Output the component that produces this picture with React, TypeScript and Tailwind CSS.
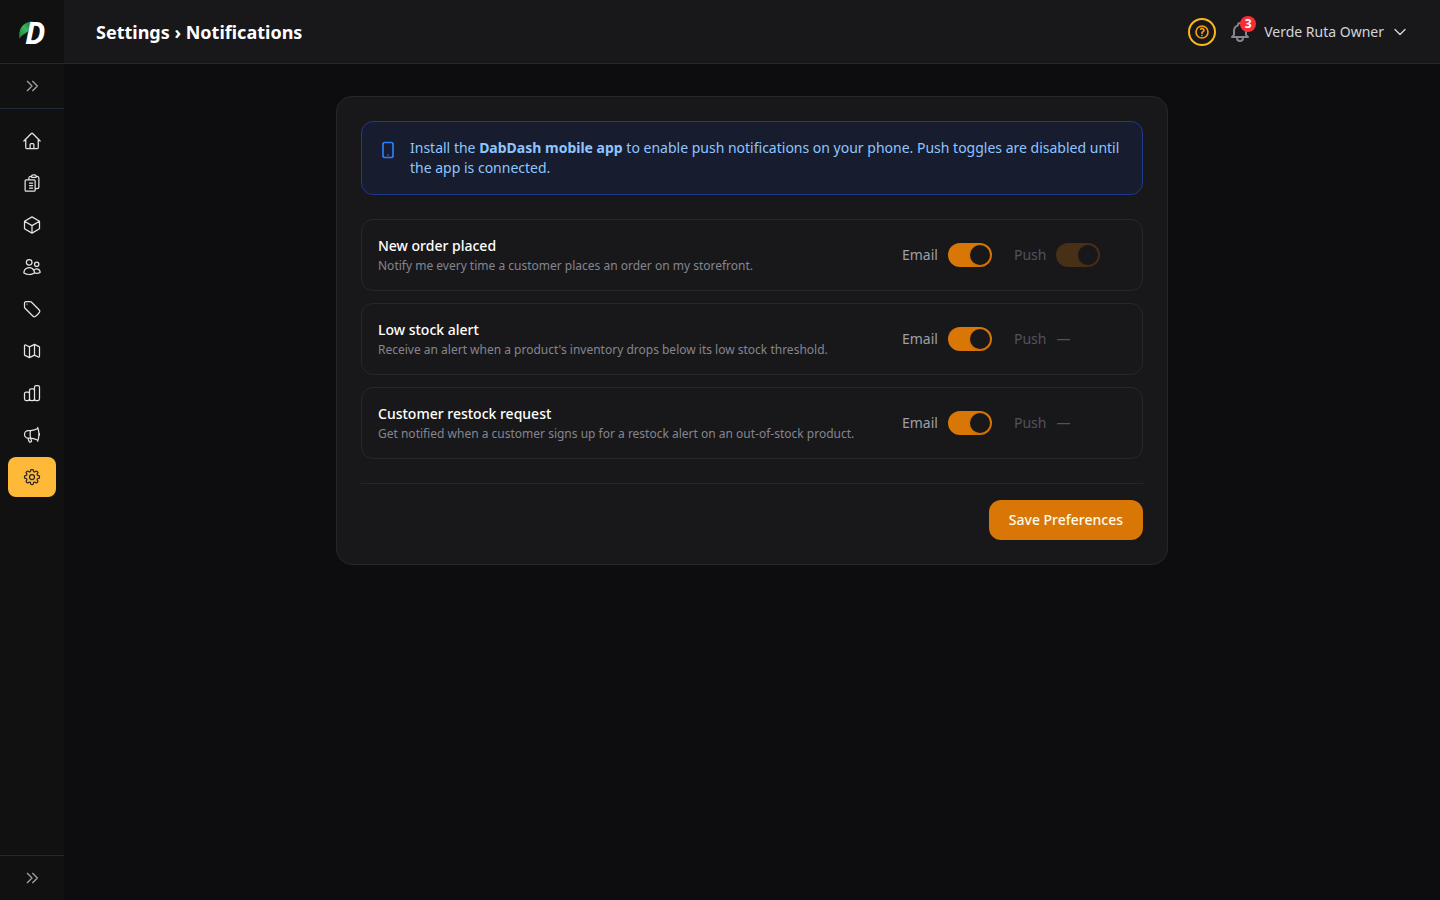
import React, { useState } from 'react';
import {
  HiOutlineHome,
  HiOutlineCube,
  HiOutlineUsers,
  HiOutlineTag,
  HiOutlineMegaphone,
  HiOutlineCog8Tooth,
  HiOutlineChevronDown,
} from 'react-icons/hi2';
import { HiOutlineBell, HiOutlineChevronDoubleRight, HiOutlineDeviceMobile } from 'react-icons/hi';

interface IconProps {
  className?: string;
}

const OutlineIcon: React.FC<IconProps & { d: string; strokeWidth?: number }> = ({ d, className, strokeWidth = 1.5 }) => (
  <svg
    viewBox="0 0 24 24"
    fill="none"
    stroke="currentColor"
    strokeWidth={strokeWidth}
    strokeLinecap="round"
    strokeLinejoin="round"
    className={className}
    aria-hidden="true"
  >
    <path d={d} />
  </svg>
);

const OrdersIcon: React.FC<IconProps> = ({ className }) => (
  <OutlineIcon
    className={className}
    d="M9 12h3.75M9 15h3.75M9 18h3.75m3 .75H18a2.25 2.25 0 0 0 2.25-2.25V6.108c0-1.135-.845-2.098-1.976-2.192a48.424 48.424 0 0 0-1.123-.08m-5.801 0c-.065.21-.1.433-.1.664 0 .414.336.75.75.75h4.5a.75.75 0 0 0 .75-.75 2.25 2.25 0 0 0-.1-.664m-5.8 0A2.251 2.251 0 0 1 13.5 2.25H15c1.012 0 1.867.668 2.15 1.586m-5.8 0c-.376.023-.75.05-1.124.08C9.095 4.01 8.25 4.973 8.25 6.108V8.25m0 0H4.875c-.621 0-1.125.504-1.125 1.125v11.25c0 .621.504 1.125 1.125 1.125h9.75c.621 0 1.125-.504 1.125-1.125V9.375c0-.621-.504-1.125-1.125-1.125H8.25Z"
  />
);

const MapIcon: React.FC<IconProps> = ({ className }) => (
  <OutlineIcon
    className={className}
    d="M9 20l-5.447-2.724A1 1 0 013 16.382V5.618a1 1 0 011.447-.894L9 7m0 13l6-3m-6 3V7m6 10l4.553 2.276A1 1 0 0021 18.382V7.618a1 1 0 00-.553-.894L15 4m0 13V4m0 0L9 7"
  />
);

const ChartIcon: React.FC<IconProps> = ({ className }) => (
  <OutlineIcon
    className={className}
    d="M9 19v-6a2 2 0 00-2-2H5a2 2 0 00-2 2v6a2 2 0 002 2h2a2 2 0 002-2zm0 0V9a2 2 0 012-2h2a2 2 0 012 2v10m-6 0a2 2 0 002 2h2a2 2 0 002-2m0 0V5a2 2 0 012-2h2a2 2 0 012 2v14a2 2 0 01-2 2h-2a2 2 0 01-2-2z"
  />
);

const HelpIcon: React.FC<IconProps> = ({ className }) => (
  <OutlineIcon
    className={className}
    strokeWidth={2.5}
    d="M9.879 7.519c1.171-1.025 3.071-1.025 4.242 0 1.172 1.025 1.172 2.687 0 3.712-.203.179-.43.326-.67.442-.745.361-1.45.999-1.45 1.827v.75M21 12a9 9 0 1 1-18 0 9 9 0 0 1 18 0Zm-9 5.25h.008v.008H12v-.008Z"
  />
);

const navItems = [
  { label: 'Dashboard', icon: HiOutlineHome },
  { label: 'Orders', icon: OrdersIcon },
  { label: 'Products', icon: HiOutlineCube },
  { label: 'Customers', icon: HiOutlineUsers },
  { label: 'Discounts', icon: HiOutlineTag },
  { label: 'Delivery zones', icon: MapIcon },
  { label: 'Analytics', icon: ChartIcon },
  { label: 'Marketing', icon: HiOutlineMegaphone },
  { label: 'Settings', icon: HiOutlineCog8Tooth, active: true },
];

const preferences = [
  {
    id: 'new_order',
    title: 'New order placed',
    description: 'Notify me every time a customer places an order on my storefront.',
    hasPush: true,
  },
  {
    id: 'low_stock',
    title: 'Low stock alert',
    description: "Receive an alert when a product's inventory drops below its low stock threshold.",
    hasPush: false,
  },
  {
    id: 'restock_request',
    title: 'Customer restock request',
    description: 'Get notified when a customer signs up for a restock alert on an out-of-stock product.',
    hasPush: false,
  },
];

const Logo: React.FC = () => (
  <svg viewBox="0 0 32 32" className="w-8 h-8 overflow-visible" role="img" aria-label="DabDash">
    <defs>
      <linearGradient id="leaf" x1="0" y1="1" x2="1" y2="0">
        <stop offset="0" stopColor="#15803d" />
        <stop offset="0.5" stopColor="#3fb55a" />
        <stop offset="1" stopColor="#14652f" />
      </linearGradient>
    </defs>
    <path d="M3.500 23C2 14 6 6 17 5C14 8 14 11 12 15C10 18 6 18 3.500 23Z" fill="url(#leaf)" />
    <text
      x="9"
      y="28"
      fontFamily="'Open Sans', sans-serif"
      fontSize="30"
      fontWeight="700"
      fontStyle="italic"
      fill="#ffffff"
    >
      D
    </text>
  </svg>
);

interface ToggleProps {
  id: string;
  checked: boolean;
  disabled?: boolean;
  onChange?: (checked: boolean) => void;
}

const Toggle: React.FC<ToggleProps> = ({ id, checked, disabled, onChange }) => (
  <span className="relative inline-flex">
    <input
      id={id}
      type="checkbox"
      role="switch"
      checked={checked}
      disabled={disabled}
      onChange={(e) => onChange?.(e.target.checked)}
      className="peer appearance-none w-11 h-6 rounded-full bg-zinc-700 checked:bg-[#d97706] cursor-pointer disabled:cursor-not-allowed disabled:opacity-25"
    />
    {/* Knob */}
    <span className="absolute top-0.5 left-0.5 w-5 h-5 rounded-full bg-[#18181b] shadow pointer-events-none transition-transform peer-checked:translate-x-5" />
  </span>
);

const Sidebar: React.FC = () => (
  <aside className="flex flex-col w-16 shrink-0 bg-[#111111]">
    <div className="flex items-center justify-center h-16 border-b border-[#1e293b]">
      <Logo />
    </div>
    <button
      className="flex items-center justify-center h-[45px] border-b border-[#1e293b] text-[#9f9fa9]"
      aria-label="Expand sidebar"
    >
      <HiOutlineChevronDoubleRight className="w-4 h-4" />
    </button>

    <nav className="flex flex-col flex-1 gap-0.5 px-2 py-3">
      {navItems.map(({ label, icon: Icon, active }) => (
        <a
          key={label}
          href="#"
          aria-label={label}
          className={`flex items-center justify-center h-10 rounded-lg ${
            active ? 'bg-[#ffb938] text-[#27272a]' : 'text-[#e4e4e7]'
          }`}
        >
          <Icon className="w-5 h-5" />
        </a>
      ))}
    </nav>

    <button
      className="flex items-center justify-center h-[45px] border-t border-[#1e293b] text-[#9f9fa9]"
      aria-label="Expand sidebar"
    >
      <HiOutlineChevronDoubleRight className="w-4 h-4" />
    </button>
  </aside>
);

const Header: React.FC = () => (
  <header className="flex items-center justify-between h-16 px-8 bg-[#18181b] border-b border-[#27272a]">
    <h1 className="text-lg font-bold text-white">Settings › Notifications</h1>
    <div className="flex items-center gap-3">
      <button
        className="flex items-center justify-center w-7 h-7 rounded-full border-2 border-[#fbb81c] text-[#f59e0b]"
        aria-label="Help"
      >
        <HelpIcon className="w-4 h-4" />
      </button>
      <button className="relative text-[#85858f]" aria-label="Notifications, 3 unread">
        <HiOutlineBell className="w-6 h-6" />
        <span className="absolute -top-1 -right-1 flex items-center justify-center w-4 h-4 rounded-full bg-[#fb2c36] text-white text-xs font-bold">
          3
        </span>
      </button>
      <button className="flex items-center gap-2 text-sm text-[#d4d4d8]">
        Verde Ruta Owner
        <HiOutlineChevronDown className="w-4 h-4" strokeWidth={2} />
      </button>
    </div>
  </header>
);

export default function App() {
  const [email, setEmail] = useState<Record<string, boolean>>({
    new_order: true,
    low_stock: true,
    restock_request: true,
  });

  return (
    <div className="flex min-h-screen bg-[#0d0d0f] font-['Noto_Sans',sans-serif]">
      <Sidebar />
      <div className="flex flex-col flex-1 min-w-0">
        <Header />
        <main className="w-full max-w-4xl mx-auto p-8">
          <form
            onSubmit={(e) => e.preventDefault()}
            className="p-6 rounded-2xl bg-[#18181b] border border-[#27272a]"
          >
            {/* Mobile app notice */}
            <div className="flex items-start gap-3 p-4 mb-6 rounded-xl bg-[#181c2f] border border-[#1c398e]">
              <HiOutlineDeviceMobile className="w-5 h-5 mt-0.5 shrink-0 text-[#2b7fff]" />
              <p className="text-sm text-[#8ec5ff]">
                Install the <strong className="font-bold">DabDash mobile app</strong> to enable push notifications on
                your phone. Push toggles are disabled until the app is connected.
              </p>
            </div>

            <div className="flex flex-col gap-3">
              {preferences.map((pref) => (
                <div key={pref.id} className="flex items-center p-4 rounded-xl border border-[#27272a]">
                  <div className="flex-1 min-w-0">
                    <h2 className="text-sm font-medium text-white">{pref.title}</h2>
                    <p className="mt-0.5 text-xs text-[#85858f]">{pref.description}</p>
                  </div>
                  <div className="flex items-center gap-2.5 w-28 text-sm text-[#9f9fa9]">
                    <label htmlFor={`${pref.id}_email`}>Email</label>
                    <Toggle
                      id={`${pref.id}_email`}
                      checked={email[pref.id]}
                      onChange={(checked) => setEmail({ ...email, [pref.id]: checked })}
                    />
                  </div>
                  <div className="flex items-center gap-2.5 w-28 text-sm text-[#52525a]">
                    {pref.hasPush ? (
                      <>
                        <label htmlFor={`${pref.id}_push`}>Push</label>
                        <Toggle id={`${pref.id}_push`} checked disabled />
                      </>
                    ) : (
                      <>
                        <span>Push</span>
                        <span>—</span>
                      </>
                    )}
                  </div>
                </div>
              ))}
            </div>

            <div className="flex justify-end pt-4 mt-6 border-t border-[#27272a]">
              <button
                type="submit"
                className="h-10 px-5 rounded-xl bg-[#d97706] hover:bg-[#b45309] text-sm font-medium text-[#fffbeb] transition-colors"
              >
                Save Preferences
              </button>
            </div>
          </form>
        </main>
      </div>
    </div>
  );
}
